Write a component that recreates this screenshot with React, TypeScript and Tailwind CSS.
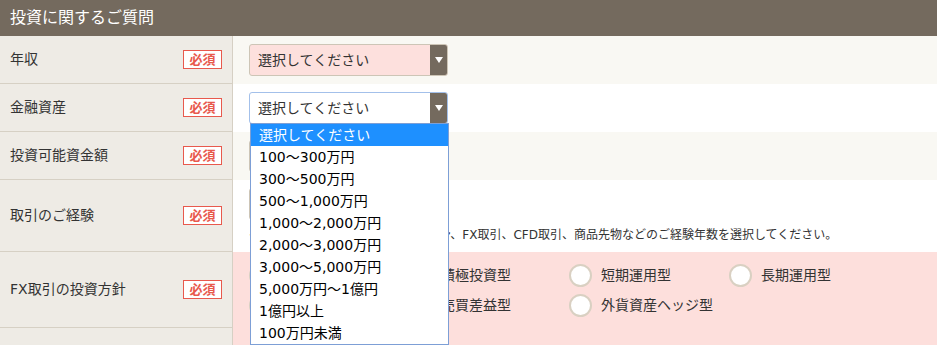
const FONT = { fontFamily: '"DejaVu Sans", "Noto Sans CJK JP", sans-serif' };

const options = [
  '選択してください',
  '100〜300万円',
  '300〜500万円',
  '500〜1,000万円',
  '1,000〜2,000万円',
  '2,000〜3,000万円',
  '3,000〜5,000万円',
  '5,000万円〜1億円',
  '1億円以上',
  '100万円未満',
];

function Badge() {
  return (
    <span className="flex h-[19px] w-[39px] items-center justify-center border border-[#e8594d] bg-white text-[13px] font-bold leading-none text-[#e8594d]">
      必須
    </span>
  );
}

function Select({ tone }: { tone: 'error' | 'focus' | 'plain' }) {
  const box =
    tone === 'error'
      ? 'bg-[#fde0dd] border-[#cdc5b6]'
      : tone === 'focus'
        ? 'bg-white border-[#a3c0ea]'
        : 'bg-white border-[#cdc5b6]';
  return (
    <div className={`flex h-[32px] w-[199px] overflow-hidden rounded-[3px] border ${box}`}>
      <div className="flex flex-1 items-center pl-[8px] text-[14px] text-[#333]">選択してください</div>
      <div className="flex w-[17px] items-center justify-center bg-[#746a5e]">
        <svg width="8" height="6" viewBox="0 0 8 6">
          <path d="M0 0h8L4 6z" fill="#fff" />
        </svg>
      </div>
    </div>
  );
}

function Row({
  label,
  height,
  right,
  badge = true,
  children,
}: {
  label: string;
  height: string;
  right: string;
  badge?: boolean;
  children?: React.ReactNode;
}) {
  return (
    <div className={`flex ${height}`}>
      <div className="flex w-[233px] shrink-0 items-center justify-between border-b border-r border-[#d6d0c4] bg-[#eeebe5] pl-[10px] pr-[10px] text-[14px] text-[#333]">
        <span>{label}</span>
        {badge && <Badge />}
      </div>
      <div className={`flex-1 pl-[16px] ${right}`}>{children}</div>
    </div>
  );
}

function Radio({ label }: { label: string }) {
  return (
    <div className="flex w-[160px] items-center">
      <span className="h-[23px] w-[23px] shrink-0 rounded-full border-2 border-[#d9d0c2] bg-white" />
      <span className="ml-[9px] text-[14px] text-[#333]">{label}</span>
    </div>
  );
}

export default function App() {
  return (
    <div className="relative h-[345px] w-[937px] overflow-hidden bg-white" style={FONT}>
      <div className="flex h-[36px] items-center bg-[#746a5e] px-[10px] text-[16px] text-white">投資に関するご質問</div>

      <Row label="年収" height="h-[48px]" right="bg-[#f9f8f3] pt-[8px]">
        <Select tone="error" />
      </Row>
      <Row label="金融資産" height="h-[48px]" right="bg-white pt-[8px]">
        <Select tone="focus" />
      </Row>
      <Row label="投資可能資金額" height="h-[48px]" right="bg-[#f9f8f3] pt-[8px]">
        <Select tone="plain" />
      </Row>
      <Row label="取引のご経験" height="h-[72px]" right="bg-white pt-[8px]">
        <Select tone="plain" />
        <p className="mt-[7px] text-[12px] leading-[16px] text-[#333]">
          ※株式、投資信託、債券、オプション、FX取引、CFD取引、商品先物などのご経験年数を選択してください。
        </p>
      </Row>
      <Row label="FX取引の投資方針" height="h-[76px]" right="bg-[#fddfdc] pt-[8px]">
        <div className="flex h-[30px]">
          <Radio label="安定運用型" />
          <Radio label="積極投資型" />
          <Radio label="短期運用型" />
          <Radio label="長期運用型" />
        </div>
        <div className="flex h-[30px]">
          <Radio label="金利差益型" />
          <Radio label="売買差益型" />
          <Radio label="外貨資産ヘッジ型" />
        </div>
      </Row>
      <Row label="" badge={false} height="h-[48px]" right="bg-[#fddfdc]" />

      <ul className="absolute left-[250px] top-[123px] w-[199px] border border-[#7d9fd6] bg-white">
        {options.map((o, i) => (
          <li
            key={o}
            className={`flex h-[22px] items-center pl-[8px] text-[14px] ${i === 0 ? 'bg-[#1e90ff] text-white' : 'text-black'}`}
          >
            {o}
          </li>
        ))}
      </ul>
    </div>
  );
}
